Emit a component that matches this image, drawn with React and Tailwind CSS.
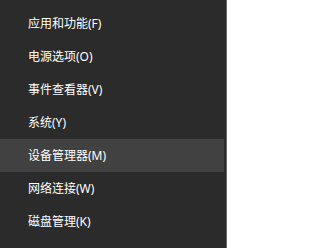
export default function App() {
  const items = [
    '应用和功能(F)',
    '电源选项(O)',
    '事件查看器(V)',
    '系统(Y)',
    '设备管理器(M)',
    '网络连接(W)',
    '磁盘管理(K)',
  ];

  return (
    <div
      className="w-[227px] h-[248px] bg-[#2b2b2b] border-r border-[#6b6b6b] pt-[7px]"
      style={{ fontFamily: '"Noto Sans", "Noto Sans CJK SC", sans-serif' }}
    >
      {items.map((label, i) => (
        <div
          key={label}
          className={
            i === 4
              ? 'h-[33px] mr-[2px] pl-[28px] flex items-center bg-[#414141] text-[12px] text-white'
              : 'h-[33px] mr-[2px] pl-[28px] flex items-center text-[12px] text-white'
          }
        >
          {label}
        </div>
      ))}
    </div>
  );
}
